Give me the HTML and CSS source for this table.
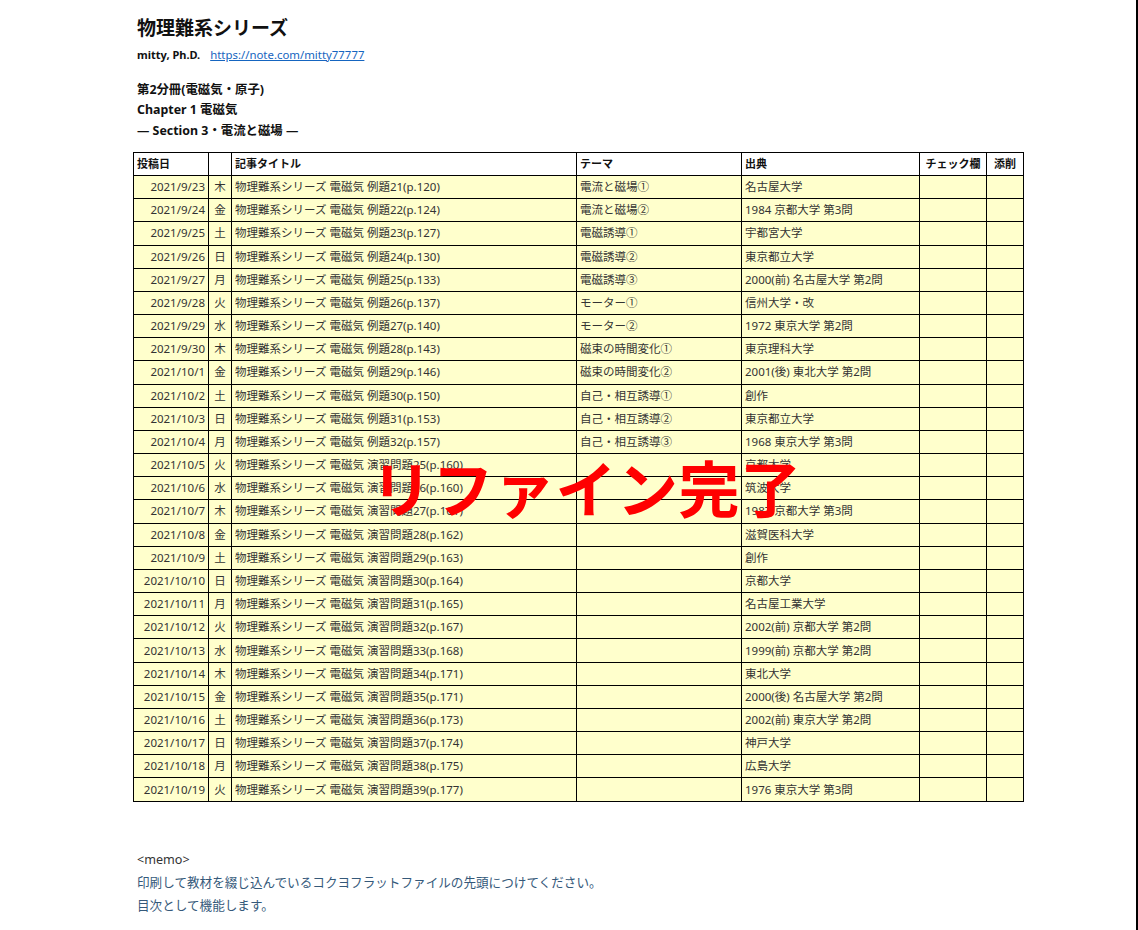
FILE: index.html
```html
<!DOCTYPE html>
<html lang="ja">
<head>
<meta charset="utf-8">
<title>物理難系シリーズ</title>
<link rel="stylesheet" href="styles.css">
</head>
<body>
<div class="page">
  <div class="content">
    <h1 class="title">物理難系シリーズ</h1>
    <p class="author"><span class="name">mitty, Ph.D.</span><a class="link" href="#">https://note.com/mitty77777</a></p>
    <div class="section">
      <p>第2分冊(電磁気・原子)</p>
      <p>Chapter 1 電磁気</p>
      <p>― Section 3・電流と磁場 ―</p>
    </div>
    <div class="table-wrap">
      <table class="toc">
        <colgroup>
          <col class="c-date"><col class="c-day"><col class="c-title"><col class="c-theme"><col class="c-src"><col class="c-check"><col class="c-fix">
        </colgroup>
        <thead>
          <tr><th>投稿日</th><th></th><th>記事タイトル</th><th>テーマ</th><th>出典</th><th class="ctr">チェック欄</th><th class="ctr">添削</th></tr>
        </thead>
        <tbody>
          <tr><td class="date">2021/9/23</td><td class="day">木</td><td>物理難系シリーズ 電磁気 例題21(p.120)</td><td>電流と磁場①</td><td>名古屋大学</td><td></td><td></td></tr>
          <tr><td class="date">2021/9/24</td><td class="day">金</td><td>物理難系シリーズ 電磁気 例題22(p.124)</td><td>電流と磁場②</td><td>1984 京都大学 第3問</td><td></td><td></td></tr>
          <tr><td class="date">2021/9/25</td><td class="day">土</td><td>物理難系シリーズ 電磁気 例題23(p.127)</td><td>電磁誘導①</td><td>宇都宮大学</td><td></td><td></td></tr>
          <tr><td class="date">2021/9/26</td><td class="day">日</td><td>物理難系シリーズ 電磁気 例題24(p.130)</td><td>電磁誘導②</td><td>東京都立大学</td><td></td><td></td></tr>
          <tr><td class="date">2021/9/27</td><td class="day">月</td><td>物理難系シリーズ 電磁気 例題25(p.133)</td><td>電磁誘導③</td><td>2000(前) 名古屋大学 第2問</td><td></td><td></td></tr>
          <tr><td class="date">2021/9/28</td><td class="day">火</td><td>物理難系シリーズ 電磁気 例題26(p.137)</td><td>モーター①</td><td>信州大学・改</td><td></td><td></td></tr>
          <tr><td class="date">2021/9/29</td><td class="day">水</td><td>物理難系シリーズ 電磁気 例題27(p.140)</td><td>モーター②</td><td>1972 東京大学 第2問</td><td></td><td></td></tr>
          <tr><td class="date">2021/9/30</td><td class="day">木</td><td>物理難系シリーズ 電磁気 例題28(p.143)</td><td>磁束の時間変化①</td><td>東京理科大学</td><td></td><td></td></tr>
          <tr><td class="date">2021/10/1</td><td class="day">金</td><td>物理難系シリーズ 電磁気 例題29(p.146)</td><td>磁束の時間変化②</td><td>2001(後) 東北大学 第2問</td><td></td><td></td></tr>
          <tr><td class="date">2021/10/2</td><td class="day">土</td><td>物理難系シリーズ 電磁気 例題30(p.150)</td><td>自己・相互誘導①</td><td>創作</td><td></td><td></td></tr>
          <tr><td class="date">2021/10/3</td><td class="day">日</td><td>物理難系シリーズ 電磁気 例題31(p.153)</td><td>自己・相互誘導②</td><td>東京都立大学</td><td></td><td></td></tr>
          <tr><td class="date">2021/10/4</td><td class="day">月</td><td>物理難系シリーズ 電磁気 例題32(p.157)</td><td>自己・相互誘導③</td><td>1968 東京大学 第3問</td><td></td><td></td></tr>
          <tr><td class="date">2021/10/5</td><td class="day">火</td><td>物理難系シリーズ 電磁気 演習問題25(p.160)</td><td></td><td>京都大学</td><td></td><td></td></tr>
          <tr><td class="date">2021/10/6</td><td class="day">水</td><td>物理難系シリーズ 電磁気 演習問題26(p.160)</td><td></td><td>筑波大学</td><td></td><td></td></tr>
          <tr><td class="date">2021/10/7</td><td class="day">木</td><td>物理難系シリーズ 電磁気 演習問題27(p.161)</td><td></td><td>1987 京都大学 第3問</td><td></td><td></td></tr>
          <tr><td class="date">2021/10/8</td><td class="day">金</td><td>物理難系シリーズ 電磁気 演習問題28(p.162)</td><td></td><td>滋賀医科大学</td><td></td><td></td></tr>
          <tr><td class="date">2021/10/9</td><td class="day">土</td><td>物理難系シリーズ 電磁気 演習問題29(p.163)</td><td></td><td>創作</td><td></td><td></td></tr>
          <tr><td class="date">2021/10/10</td><td class="day">日</td><td>物理難系シリーズ 電磁気 演習問題30(p.164)</td><td></td><td>京都大学</td><td></td><td></td></tr>
          <tr><td class="date">2021/10/11</td><td class="day">月</td><td>物理難系シリーズ 電磁気 演習問題31(p.165)</td><td></td><td>名古屋工業大学</td><td></td><td></td></tr>
          <tr><td class="date">2021/10/12</td><td class="day">火</td><td>物理難系シリーズ 電磁気 演習問題32(p.167)</td><td></td><td>2002(前) 京都大学 第2問</td><td></td><td></td></tr>
          <tr><td class="date">2021/10/13</td><td class="day">水</td><td>物理難系シリーズ 電磁気 演習問題33(p.168)</td><td></td><td>1999(前) 京都大学 第2問</td><td></td><td></td></tr>
          <tr><td class="date">2021/10/14</td><td class="day">木</td><td>物理難系シリーズ 電磁気 演習問題34(p.171)</td><td></td><td>東北大学</td><td></td><td></td></tr>
          <tr><td class="date">2021/10/15</td><td class="day">金</td><td>物理難系シリーズ 電磁気 演習問題35(p.171)</td><td></td><td>2000(後) 名古屋大学 第2問</td><td></td><td></td></tr>
          <tr><td class="date">2021/10/16</td><td class="day">土</td><td>物理難系シリーズ 電磁気 演習問題36(p.173)</td><td></td><td>2002(前) 東京大学 第2問</td><td></td><td></td></tr>
          <tr><td class="date">2021/10/17</td><td class="day">日</td><td>物理難系シリーズ 電磁気 演習問題37(p.174)</td><td></td><td>神戸大学</td><td></td><td></td></tr>
          <tr><td class="date">2021/10/18</td><td class="day">月</td><td>物理難系シリーズ 電磁気 演習問題38(p.175)</td><td></td><td>広島大学</td><td></td><td></td></tr>
          <tr><td class="date">2021/10/19</td><td class="day">火</td><td>物理難系シリーズ 電磁気 演習問題39(p.177)</td><td></td><td>1976 東京大学 第3問</td><td></td><td></td></tr>
        </tbody>
      </table>
      <div class="stamp">リファイン完了</div>
    </div>
    <div class="memo">
      <p class="memo-head">&lt;memo&gt;</p>
      <p class="memo-text">印刷して教材を綴じ込んでいるコクヨフラットファイルの先頭につけてください。</p>
      <p class="memo-text">目次として機能します。</p>
    </div>
  </div>
</div>
</body>
</html>
```

FILE: styles.css
```css
html, body {
  margin: 0;
  padding: 0;
  background: #fff;
}

body {
  font-family: "Noto Sans", "Noto Sans CJK JP", sans-serif;
  color: #222;
}

.page {
  width: 1136px;
  height: 930px;
  border-right: 2px solid #000;
  overflow: hidden;
}

.content {
  padding-left: 133px;
}

.title {
  margin: 14px 0 0 4px;
  font-size: 19px;
  line-height: 28px;
  font-weight: 700;
  color: #111;
}

.author {
  margin: 3px 0 0 4px;
  font-size: 11px;
  line-height: 20px;
  display: flex;
  align-items: baseline;
  gap: 10px;
}

.name {
  font-weight: 700;
  color: #111;
}

.link {
  color: #1565c0;
  text-decoration: underline;
  font-size: 11.4px;
}

.section {
  margin: 14.75px 0 0 4px;
}

.section p {
  margin: 0;
  font-size: 12.4px;
  line-height: 20.5px;
  font-weight: 700;
  color: #111;
}

.table-wrap {
  position: relative;
  margin-top: 10.75px;
  width: 891px;
}

.toc {
  border-collapse: collapse;
  table-layout: fixed;
  width: 890px;
  font-size: 11.5px;
}

.c-date { width: 75px; }
.c-day { width: 23px; }
.c-title { width: 345px; }
.c-theme { width: 165px; }
.c-src { width: 178px; }
.c-check { width: 67px; }
.c-fix { width: 37px; }

.toc th,
.toc td {
  border: 1px solid #000;
  padding: 0 3px;
  white-space: nowrap;
  overflow: hidden;
  line-height: 14px;
}

.toc thead tr {
  height: 23px;
}

.toc th {
  background: #fff;
  font-weight: 700;
  text-align: left;
  color: #111;
  font-size: 11px;
}

.toc th.ctr {
  text-align: center;
  padding: 0;
}

.toc tbody tr {
  height: 23.18px;
}

.toc td {
  background: #ffffcc;
  color: #333;
}

.toc td.date {
  text-align: right;
  padding-right: 3px;
}

.toc td.day {
  text-align: center;
  padding: 0;
}

.stamp {
  position: absolute;
  left: 238px;
  top: 304px;
  font-family: "Noto Sans CJK JP", sans-serif;
  font-size: 61px;
  line-height: 1;
  letter-spacing: 0.5px;
  font-weight: 700;
  color: #ff0000;
  white-space: nowrap;
}

.memo {
  margin: 46px 0 0 4px;
}

.memo p {
  margin: 0;
  font-size: 12.6px;
  line-height: 23px;
}

.memo-head {
  color: #333;
}

.memo-text {
  color: #35597a;
}
```
